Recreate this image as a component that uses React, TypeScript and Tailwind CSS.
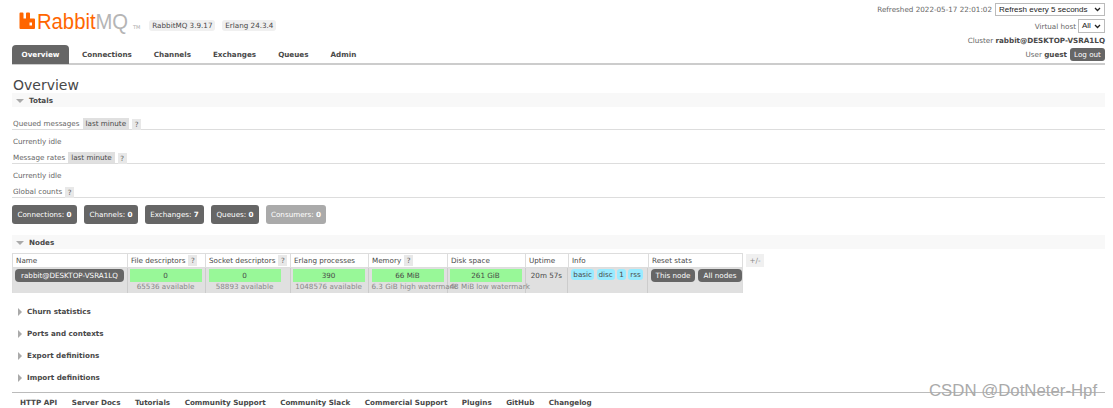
const tabs = ["Connections", "Channels", "Exchanges", "Queues", "Admin"];
const counts = [
  { label: "Connections:", value: "0", width: "w-[65px]" },
  { label: "Channels:", value: "0", width: "w-[54px]" },
  { label: "Exchanges:", value: "7", width: "w-[59px]" },
  { label: "Queues:", value: "0", width: "w-[48px]" },
];
const links = [
  "HTTP API",
  "Server Docs",
  "Tutorials",
  "Community Support",
  "Community Slack",
  "Commercial Support",
  "Plugins",
  "GitHub",
  "Changelog",
];
const closedSections = [
  "Churn statistics",
  "Ports and contexts",
  "Export definitions",
  "Import definitions",
];
const stats = [
  { value: "0", note: "65536 available", box: "w-[78px] items-center pl-[2px] pr-[3px]" },
  { value: "0", note: "58893 available", box: "w-[85px] items-center pl-[3px] pr-[9px]" },
  { value: "390", note: "1048576 available", box: "w-[78px] items-center pl-[2px] pr-[3px]" },
  { value: "66 MiB", note: "6.3 GiB high watermark", box: "w-[79px] items-start pl-[3px]" },
  { value: "261 GiB", note: "48 MiB low watermark", box: "w-[78px] items-start pl-[2px]" },
];
const tags = ["basic", "disc", "1", "rss"];

function Help() {
  return <span className="ml-[3px] mt-[1px] inline-block h-[11px] w-[9px] bg-[#e8e8e8] text-center leading-[12px] text-[#666]">?</span>;
}

function Logo() {
  return (
    <div className="flex items-start pl-[7px] pt-[9px]">
      <svg width="17" height="18" viewBox="0 0 17 18" className="mt-[3px]">
        <path
          d="M0.5 16V1.5a1 1 0 0 1 1-1h2a1 1 0 0 1 1 1V6.5h2.5V1.5a1 1 0 0 1 1-1h2a1 1 0 0 1 1 1V6.5h4a1 1 0 0 1 1 1V16a1 1 0 0 1-1 1H1.500a1 1 0 0 1-1-1ZM10.500 10.500v3h2.500v-3Z"
          fill="#f60"
          fillRule="evenodd"
        />
      </svg>
      <span className="ml-[1px] mt-[1px] w-[92px] origin-left scale-x-[0.92] text-[22px] leading-[24px] font-['Liberation_Sans',sans-serif] text-[#f60]">
        Rabbit<span className="text-[#b5b5b5]">MQ</span>
      </span>
      <span className="ml-[4px] mt-[15px] text-[5px] leading-[6px] text-[#aaa]">TM</span>
      <span className="ml-[9px] mt-[11px] flex h-[11px] w-[66px] items-center justify-center rounded-[3px] bg-[#f0f0f0] pt-[2px]">RabbitMQ 3.9.17</span>
      <span className="ml-[7px] mt-[11px] flex h-[11px] w-[54px] items-center justify-center rounded-[3px] bg-[#f0f0f0] pt-[2px]">Erlang 24.3.4</span>
    </div>
  );
}

function Section({ title, open = false }: { title: string; open?: boolean }) {
  return (
    <div className={`flex h-[14px] items-center pt-[2px] font-bold ${open ? "bg-[#f8f8f8]" : ""}`}>
      {open ? (
        <span className="ml-[4px] mr-[5px] h-0 w-0 border-x-[4px] border-t-[4px] border-x-transparent border-t-[#aaa]" />
      ) : (
        <span className="ml-[6px] mr-[5px] h-0 w-0 border-y-[4px] border-l-[4px] border-y-transparent border-l-[#aaa]" />
      )}
      {title}
    </div>
  );
}

function ChartRow({ label, range = false, mt }: { label: string; range?: boolean; mt: string }) {
  return (
    <div className={`${mt} flex h-[12px] items-start border-b border-[#ddd] pl-[1px] leading-[12px]`}>
      <span className="text-[#666]">{label}</span>
      {range && <span className="ml-[3px] h-[11px] bg-[#e0e0e0] px-[3px]">last minute</span>}
      <Help />
    </div>
  );
}

function Count({ label, value, width, faded = false }: { label: string; value: string; width: string; faded?: boolean }) {
  return (
    <div className={`flex h-[19px] items-center justify-center rounded-[3px] pt-[2px] text-white ${width} ${faded ? "bg-[#aaa]" : "bg-[#666]"}`}>
      {label}&nbsp;<b>{value}</b>
    </div>
  );
}

function HeaderCell({ title, help = false, width }: { title: string; help?: boolean; width: string }) {
  return (
    <div className={`flex h-[13px] items-start border-r border-[#ddd] pl-[3px] leading-[14px] ${width}`}>
      {title}
      {help && <Help />}
    </div>
  );
}

export default function App() {
  return (
    <div className="relative h-[408px] w-[1113px] overflow-hidden whitespace-nowrap bg-white font-['DejaVu_Sans',sans-serif] text-[7.2px] text-[#484848]">
      <div className="ml-[12px] mr-[8px]">
        <div className="flex h-[65px] justify-between border-b-2 border-[#ccc]">
          <div>
            <div className="h-[45px]">
              <Logo />
            </div>
            <div className="flex h-[19px] items-center font-bold">
              <div className="flex h-[19px] w-[57px] items-center justify-center rounded-t-[4px] bg-[#666] pt-[2px] text-white">Overview</div>
              <div className="ml-[13px] mt-[2px] flex gap-[22px]">
                {tabs.map((tab) => (
                  <span key={tab}>{tab}</span>
                ))}
              </div>
            </div>
          </div>
          <div className="flex flex-col items-end text-[#666]">
            <div className="mt-[3px] flex h-[13px] items-center">
              <span className="pt-[2px]">Refreshed 2022-05-17 22:01:02</span>
              <div className="ml-[3px] flex h-[13px] w-[110px] items-center justify-between border border-[#bbb] px-[3px] font-['Liberation_Sans',sans-serif] text-[8px] text-[#222]">
                Refresh every 5 seconds
                <svg width="7" height="5" viewBox="0 0 7 5"><path d="M1 1l2.500 2.500L6 1" fill="none" stroke="#222" strokeWidth="1.300" /></svg>
              </div>
            </div>
            <div className="mt-[3px] flex h-[14px] items-center">
              <span className="pt-[3px]">Virtual host</span>
              <div className="ml-[2px] flex h-[14px] w-[27px] items-center justify-between border border-[#bbb] px-[3px] font-['Liberation_Sans',sans-serif] text-[8px] text-[#222]">
                All
                <svg width="7" height="5" viewBox="0 0 7 5"><path d="M1 1l2.500 2.500L6 1" fill="none" stroke="#222" strokeWidth="1.300" /></svg>
              </div>
            </div>
            <div className="mt-[3px] h-[10px] leading-[10px]">
              Cluster <b className="text-[#484848]">rabbit@DESKTOP-VSRA1LQ</b>
            </div>
            <div className="mt-[2px] flex h-[13px] items-center">
              <span className="pt-[2px]">User <b className="text-[#484848]">guest</b></span>
              <div className="ml-[3px] flex h-[13px] w-[35px] items-center justify-center rounded-[3px] bg-[#666] pt-[2px] text-white">Log out</div>
            </div>
          </div>
        </div>

        <h1 className="mt-[12px] h-[16px] pl-[1px] text-[14px] leading-[16px] font-normal">Overview</h1>

        <Section title="Totals" open />
        <ChartRow label="Queued messages" range mt="mt-[11px]" />
        <div className="mt-[6px] h-[10px] pl-[1px] leading-[12px] text-[#666]">Currently idle</div>
        <ChartRow label="Message rates" range mt="mt-[6px]" />
        <div className="mt-[6px] h-[10px] pl-[1px] leading-[12px] text-[#666]">Currently idle</div>
        <ChartRow label="Global counts" mt="mt-[6px]" />

        <div className="mt-[7px] flex gap-[7px]">
          {counts.map((c) => (
            <Count key={c.label} label={c.label} value={c.value} width={c.width} />
          ))}
          <Count label="Consumers:" value="0" width="w-[60px]" faded />
        </div>

        <div className="mt-[11px]">
          <Section title="Nodes" open />
        </div>

        <div className="mt-[4px] flex items-start">
          <div className="w-[731px] border-x border-t border-[#ddd]">
            <div className="flex border-b border-[#ddd] bg-white">
              <HeaderCell title="Name" width="w-[115px]" />
              <HeaderCell title="File descriptors" help width="w-[78px]" />
              <HeaderCell title="Socket descriptors" help width="w-[85px]" />
              <HeaderCell title="Erlang processes" width="w-[78px]" />
              <HeaderCell title="Memory" help width="w-[79px]" />
              <HeaderCell title="Disk space" width="w-[78px]" />
              <HeaderCell title="Uptime" width="w-[43px]" />
              <HeaderCell title="Info" width="w-[80px]" />
              <div className="h-[13px] pl-[3px] leading-[14px]">Reset stats</div>
            </div>
            <div className="flex h-[25px] bg-[#e0e0e0]">
              <div className="w-[115px] border-r border-[#ccc] pl-[2px] pt-[1px]">
                <div className="flex h-[13px] w-[109px] items-center justify-center rounded-[4px] bg-[#666] pt-[2px] text-white">rabbit@DESKTOP-VSRA1LQ</div>
              </div>
              {stats.map((s) => (
                <div key={s.note} className={`flex flex-col border-r border-[#ccc] pt-[1px] ${s.box}`}>
                  <div className="flex h-[13px] w-[72px] shrink-0 items-center justify-center bg-[#98f898] pt-[2px]">{s.value}</div>
                  <div className="whitespace-nowrap leading-[10px] text-[#888]">{s.note}</div>
                </div>
              ))}
              <div className="w-[43px] border-r border-[#ccc] pt-[2px] text-center leading-[12px]">20m 57s</div>
              <div className="flex w-[80px] items-start gap-[2.500px] border-r border-[#ccc] pl-[3px] pt-[1px]">
                {tags.map((t) => (
                  <span key={t} className="h-[11px] rounded-[3px] bg-[#99ebff] px-[2px] leading-[12px]">{t}</span>
                ))}
              </div>
              <div className="flex items-start gap-[3px] pl-[3px] pt-[1px] text-white">
                <span className="flex h-[13px] w-[44px] items-center justify-center rounded-[4px] bg-[#666] pt-[2px]">This node</span>
                <span className="flex h-[13px] w-[44px] items-center justify-center rounded-[4px] bg-[#666] pt-[2px]">All nodes</span>
              </div>
            </div>
          </div>
          <div className="ml-[3px] mt-[1px] flex h-[13px] w-[18px] items-center justify-center bg-[#f0f0f0] pt-[2px] text-[#888]">+/-</div>
        </div>

        <div className="mt-[11px] flex flex-col gap-[8px]">
          {closedSections.map((s) => (
            <Section key={s} title={s} />
          ))}
        </div>

        <div className="mt-[8px] flex h-[20px] items-center gap-[14.500px] border-t border-[#bbb] pl-[8px] pt-[2px] font-bold">
          {links.map((l) => (
            <span key={l}>{l}</span>
          ))}
        </div>
      </div>
      <span className="absolute left-[929px] top-[381px] font-['Liberation_Sans',sans-serif] text-[16.800px] leading-[20px] text-[#aaa]">CSDN @DotNeter-Hpf</span>
    </div>
  );
}
